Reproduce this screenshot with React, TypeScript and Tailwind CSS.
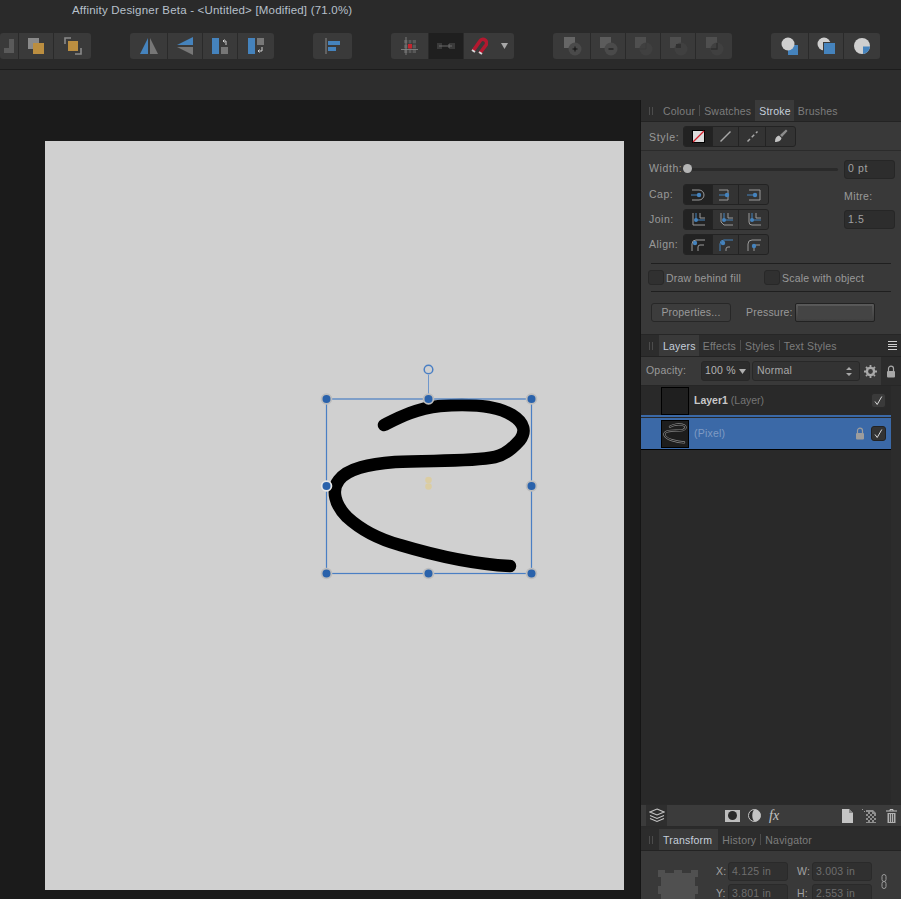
import type { ReactNode } from "react";

const Blue = "#4583bd";
const Grey = "#777777";

const STROKE_PATH =
  "M384 425 C400 417 415 409 440 406 C465 404 495 405 512 415 C525 423 526 432 520 440 C512 449 505 455 495 457 C470 462 430 460 395 462 C370 464 348 468 339 480 C331 490 335 505 347 517 C360 529 378 539 400 545 C430 554 470 564 510 566";

const Btn = ({ w, dark, children }: { w: number; dark?: boolean; children?: ReactNode }) => (
  <div
    className={`h-full flex items-center justify-center border-r border-[#2a2a2a] last:border-r-0 ${dark ? "bg-[#1f1f1f]" : ""}`}
    style={{ width: w }}
  >
    {children}
  </div>
);

const Group = ({ children, className = "" }: { children: ReactNode; className?: string }) => (
  <div className={`flex h-[26px] rounded-[3px] bg-[#3a3a3a] overflow-hidden ${className}`}>{children}</div>
);

const Ico = ({ w = 20, h = 20, children }: { w?: number; h?: number; children: ReactNode }) => (
  <svg width={w} height={h} viewBox={`0 0 ${w} ${h}`}>
    {children}
  </svg>
);

const ArrangeIcon = ({ front }: { front: boolean }) =>
  front ? (
    <Ico>
      <rect x="2" y="2" width="11" height="11" fill="#8a8a8a" />
      <rect x="7" y="7" width="11" height="11" fill="#bb8e40" />
    </Ico>
  ) : (
    <Ico>
      <path d="M2 8V2h6M18 12v6h-6" fill="none" stroke="#8a8a8a" strokeWidth="1.6" />
      <rect x="5" y="5" width="10" height="10" fill="#bb8e40" />
    </Ico>
  );

const Boolean1 = ({ kind }: { kind: "add" | "sub" | "x1" | "x2" | "x3" }) => {
  const bright = kind === "add" ? "#666666" : kind === "sub" ? "#5c5c5c" : "#4f4f4f";
  return (
    <Ico w={22} h={22}>
      <rect x="3" y="2" width="11" height="11" fill={bright} />
      <circle cx="14" cy="14" r="6.5" fill={kind === "add" || kind === "sub" ? "#4a4a4a" : "#404040"} />
      {kind === "add" && <path d="M11.5 14h5M14 11.5v5" stroke="#111" strokeWidth="1" />}
      {kind === "sub" && <path d="M11.5 14h5" stroke="#111" strokeWidth="1" />}
      {kind === "x1" && <path d="M14 8v6H8" stroke="#3a3a3a" strokeWidth="1" fill="none" />}
      {kind === "x2" && <path d="M9 9h5v4h-5z" fill="#303030" />}
      {kind === "x3" && <path d="M14 8v6H8" stroke="#2e2e2e" strokeWidth="1.3" fill="none" />}
    </Ico>
  );
};

const TabRow = ({
  tabs,
  active,
  right,
  activePr = 3,
}: {
  tabs: string[];
  active: string;
  right?: ReactNode;
  activePr?: number;
}) => (
  <div className="flex h-[22px] items-end bg-[#2c2c2c] text-[10.5px] tracking-[0.2px] text-[#7d7d7d] border-b border-[#232323] shrink-0 relative">
    <div className="w-[18px] h-full flex items-center justify-center gap-[2px] pl-[1px]">
      <span className="w-px h-[8px] bg-[#4c4c4c]" />
      <span className="w-px h-[8px] bg-[#4c4c4c]" />
    </div>
    {tabs.map((t, i) => (
      <div key={t} className="flex items-center h-full">
        {t === active ? (
          <span
            className="h-full flex items-center pl-[4px] pt-[2px] bg-[#3a3a3a] text-[#c6d0dc] font-medium"
            style={{ paddingRight: activePr }}
          >
            {t}
          </span>
        ) : (
          <span className="px-[4px] pt-[2px]">{t}</span>
        )}
        {t !== active && i < tabs.length - 1 && tabs[i + 1] !== active && (
          <span className="w-px h-[11px] bg-[#4c4c4c]" />
        )}
      </div>
    ))}
    {right}
  </div>
);

const Segments = ({ items, widths }: { items: ReactNode[]; widths: number[] }) => (
  <div className="flex h-[21px] rounded-[3px] border border-[#232323] bg-[#333333] overflow-hidden">
    {items.map((it, i) => (
      <div
        key={i}
        className={`h-full flex items-center justify-center border-r border-[#232323] last:border-r-0 ${i === 0 ? "bg-[#222222]" : ""}`}
        style={{ width: widths[i] }}
      >
        {it}
      </div>
    ))}
  </div>
);

const CapIcon = ({ kind }: { kind: number }) => (
  <Ico w={16} h={14}>
    {kind === 0 && <path d="M2 2h7a5 5 0 0 1 0 10H2" fill="none" stroke="#9a9a9a" />}
    {kind === 1 && <path d="M1 2h9v10H1" fill="none" stroke="#9a9a9a" />}
    {kind === 2 && <path d="M3 2h11v10H3" fill="none" stroke="#9a9a9a" />}
    <path d="M1 7h9" stroke={Blue} />
    <circle cx="9" cy="7" r="2.2" fill={Blue} />
  </Ico>
);

const JoinIcon = ({ kind }: { kind: number }) => (
  <Ico w={16} h={14}>
    <path
      d={kind === 0 ? "M3 0v12h12" : kind === 1 ? "M3 0v9l3 3h9" : "M3 0v9a3 3 0 0 0 3 3h9"}
      fill="none"
      stroke="#9a9a9a"
    />
    <path d="M10 0v5h5" fill="none" stroke="#9a9a9a" />
    <path d="M6 0v7h9" fill="none" stroke={Blue} />
    <circle cx="6" cy="7" r="2" fill={Blue} />
  </Ico>
);

const AlignIcon = ({ kind }: { kind: number }) => (
  <Ico w={16} h={14}>
    <path d="M2 13V6a4 4 0 0 1 4-4h9" fill="none" stroke={kind === 1 ? Blue : "#9a9a9a"} />
    {kind !== 1 && <path d="M8 13V9a2 2 0 0 1 2-2h4" fill="none" stroke="#9a9a9a" />}
    {kind === 1 && <path d="M8 13v-2a2 2 0 0 1 2-2h2" fill="none" stroke="#9a9a9a" />}
    <circle cx={kind === 2 ? 8 : 5} cy={kind === 2 ? 8 : 5} r="2.2" fill={Blue} />
  </Ico>
);

const Field = ({ w, h, children }: { w: number; h: number; children: ReactNode }) => (
  <div
    className="rounded-[3px] bg-[#2d2d2d] border border-[#262626] flex items-center pl-[3px] text-[#a2a2a2] tracking-[0.6px]"
    style={{ width: w, height: h }}
  >
    {children}
  </div>
);

const Lock = ({ c = "#a8a8a8" }: { c?: string }) => (
  <Ico w={10} h={13}>
    <path d="M2.5 6V3.6a2.5 2.5 0 0 1 5 0V6" fill="none" stroke={c} strokeWidth="1.2" />
    <rect x="1" y="6" width="8" height="6.5" rx="1" fill={c} />
  </Ico>
);

const Check = ({ strong }: { strong?: boolean }) => (
  <div className={`w-[15px] h-[15px] rounded-[3px] flex items-center justify-center border ${strong ? "bg-[#333333] border-[#222222]" : "bg-[#3a3a3a] border-[#2a2a2a]"}`}>
    <Ico w={11} h={11}>
      <path d="M2 6.5 4.2 9.5 8.8 1.5" fill="none" stroke="#d8d8d8" strokeWidth="1" />
    </Ico>
  </div>
);

const Handle = ({ x, y, ring = "#bdbdbd" }: { x: number; y: number; ring?: string }) => (
  <g>
    <circle cx={x} cy={y} r="5.8" fill={ring} />
    <circle cx={x} cy={y} r="4" fill="#2a62ab" />
  </g>
);

const Canvas = () => (
  <div className="w-[640px] bg-[#1b1b1b] pl-[45px] pt-[41px] shrink-0">
    <div className="relative w-[579px] h-[749px] bg-[#d0d0d0]">
      {/* drawing, coords are relative to the window */}
      <svg className="absolute inset-0" width="579" height="749" viewBox="45 141 579 749">
        <path d={STROKE_PATH} fill="none" stroke="#000" strokeWidth="12.5" strokeLinecap="round" strokeLinejoin="round" />
        <rect x="326.5" y="399" width="205" height="174.5" fill="none" stroke="#4a7fc4" strokeWidth="1.2" />
        <path d="M428.5 375v24" stroke="#6f97cc" strokeWidth="1" />
        <circle cx="428.5" cy="369.5" r="4.3" fill="#d0d0d0" stroke="#4a7fc4" strokeWidth="1.5" />
        <circle cx="428.5" cy="480" r="3.3" fill="#dbcda3" />
        <circle cx="428.5" cy="486.5" r="3.3" fill="#dbcda3" />
        <Handle x={326.5} y={399} />
        <Handle x={428.5} y={399} />
        <Handle x={531.5} y={399} />
        <Handle x={326.5} y={486} ring="#e6e6e6" />
        <Handle x={531.5} y={486} />
        <Handle x={326.5} y={573.5} />
        <Handle x={428.5} y={573.5} />
        <Handle x={531.5} y={573.5} />
      </svg>
    </div>
  </div>
);

const StrokePanel = () => (
  <div className="h-[235px] shrink-0 flex flex-col bg-[#393939] border-b border-[#262626]">
    <TabRow tabs={["Colour", "Swatches", "Stroke", "Brushes"]} active="Stroke" />
    <div className="h-[29px] flex items-center pl-[8px] border-b border-[#2b2b2b] shrink-0">
      <span className="w-[34px] pt-[4px] tracking-[0.7px]">Style:</span>
      <Segments
        widths={[29, 26, 27, 29]}
        items={[
          <svg key="n" width="13" height="13" viewBox="0 0 13 13">
            <rect x="0.5" y="0.5" width="12" height="12" fill="#dcdcdc" stroke="#000" />
            <path d="M1 12 12 1" stroke="#d3202c" strokeWidth="1.2" />
          </svg>,
          <svg key="l" width="13" height="13" viewBox="0 0 13 13">
            <path d="M1.5 11.5 11.5 1.5" stroke="#a8a8a8" strokeWidth="1.5" />
          </svg>,
          <svg key="d" width="13" height="13" viewBox="0 0 13 13">
            <path d="M1.5 11.5 11.5 1.5" stroke="#a8a8a8" strokeWidth="1.5" strokeDasharray="3.5 2.5" />
          </svg>,
          <svg key="b" width="14" height="14" viewBox="0 0 14 14">
            <path d="M1 13c0-4 1.500-6 4-6.500L7.500 9C7 12 4 13 1 13z" fill="#c4c4c4" />
            <path d="M6 6 12 0.500 13.500 2 8 8z" fill="#8c8c8c" />
          </svg>,
        ]}
      />
    </div>
    <div className="flex items-center h-[20px] mt-[8px] pl-[8px] shrink-0">
      <span className="w-[34px] tracking-[0.6px]">Width:</span>
      <div className="relative w-[155px] h-[3px] rounded-full bg-[#2a2a2a]">
        <span className="absolute left-0 top-[-3.500px] w-[9px] h-[9px] rounded-full bg-[#b5b5b5]" />
      </div>
      <div className="ml-[6px]">
        <Field w={51} h={19}>
          0 pt
        </Field>
      </div>
    </div>
    <div className="flex pl-[8px] mt-[5px] shrink-0">
      <div className="flex flex-col gap-[4px] w-[195px]">
        {[
          { label: "Cap:", icon: (k: number) => <CapIcon kind={k} /> },
          { label: "Join:", icon: (k: number) => <JoinIcon kind={k} /> },
          { label: "Align:", icon: (k: number) => <AlignIcon kind={k} /> },
        ].map((row) => (
          <div key={row.label} className="flex items-center">
            <span className="w-[34px] tracking-[0.5px]">{row.label}</span>
            <Segments widths={[29, 26, 29]} items={[row.icon(0), row.icon(1), row.icon(2)]} />
          </div>
        ))}
      </div>
      <div className="pt-[5px]">
        <div className="h-[21px] leading-[14px] tracking-[0.4px]">Mitre:</div>
        <Field w={51} h={19}>
          1.5
        </Field>
      </div>
    </div>
    <div className="h-px bg-[#1f1f1f] mx-[10px] mt-[8px] shrink-0" />
    <div className="flex items-center h-[27px] pl-[7px] shrink-0">
      <span className="w-[16px] h-[15px] rounded-[3px] bg-[#303030] border border-[#282828] shrink-0" />
      <span className="ml-[2px] w-[98px] pt-[3px]">Draw behind fill</span>
      <span className="w-[16px] h-[15px] rounded-[3px] bg-[#303030] border border-[#282828] shrink-0" />
      <span className="ml-[2px] pt-[3px]">Scale with object</span>
    </div>
    <div className="h-px bg-[#1f1f1f] mx-[10px] shrink-0" />
    <div className="flex items-center pl-[10px] mt-[11px] shrink-0">
      <div className="w-[80px] h-[19px] rounded-[3px] border border-[#272727] bg-[#3c3c3c] flex items-center justify-center">
        Properties...
      </div>
      <span className="ml-[15px] w-[49px]">Pressure:</span>
      <div className="w-[80px] h-[19px] rounded-[2px] border border-[#222222] bg-gradient-to-b from-[#5a5a5a] to-[#3f3f3f] p-[2px]">
        <div className="h-full bg-[#444444]" />
      </div>
    </div>
  </div>
);

const LayersPanel = () => (
  <div className="flex-1 flex flex-col min-h-0 bg-[#292929]">
    <TabRow
      tabs={["Layers", "Effects", "Styles", "Text Styles"]}
      active="Layers"
      right={
        <div className="absolute right-0 top-[6px] w-[13px] flex flex-col gap-[1.500px] items-start">
          <span className="w-[9px] h-px bg-[#cfcfcf]" />
          <span className="w-[9px] h-px bg-[#cfcfcf]" />
          <span className="w-[9px] h-px bg-[#cfcfcf]" />
          <span className="w-[9px] h-px bg-[#cfcfcf]" />
        </div>
      }
    />
    <div className="h-[29px] flex items-center pl-[5px] bg-[#393939] border-b border-[#262626] shrink-0">
      <span className="w-[55px]">Opacity:</span>
      <div className="w-[49px] h-[20px] rounded-[3px] bg-[#2c2c2c] border border-[#282828] flex items-center justify-between px-[3px] text-[#b4b4b4]">
        100 %
        <svg width="7" height="5" viewBox="0 0 7 5">
          <path d="M0 0h7L3.500 5z" fill="#b0b0b0" />
        </svg>
      </div>
      <div className="ml-[2px] w-[108px] h-[20px] rounded-[3px] bg-[#333333] border border-[#282828] flex items-center justify-between pl-[4px] pr-[7px] text-[#a8a8a8]">
        Normal
        <svg width="6" height="11" viewBox="0 0 6 11">
          <path d="M0 4 3 1l3 3zM0 7l3 3 3-3z" fill="#a8a8a8" />
        </svg>
      </div>
      <div className="w-[21px] flex justify-center">
        <svg width="13" height="13" viewBox="0 0 13 13">
          <circle cx="6.500" cy="6.500" r="3.600" fill="none" stroke="#a8a8a8" strokeWidth="2.400" />
          <path d="M6.500 0v13M0 6.500h13M2 2l9 9M11 2l-9 9" stroke="#a8a8a8" strokeWidth="1.800" strokeDasharray="2 9 2 0" />
        </svg>
      </div>
      <div className="w-[20px] h-[28px] bg-[#2c2c2c] flex items-center justify-center ml-auto">
        <Lock />
      </div>
    </div>
    <div className="flex-1 flex min-h-0">
      <div className="w-[250px] flex flex-col">
        <div className="h-[31px] flex items-center pl-[20px] border-b-2 border-[#3b69a7] pr-[5px] shrink-0">
          <div className="w-[28px] h-[28px] border border-black bg-[#1f1f1f] mt-[1px]" />
          <span className="ml-[5px] font-semibold tracking-normal text-[#c8c8c8]">Layer1</span>
          <span className="ml-[3px] tracking-normal text-[#757575]">(Layer)</span>
          <div className="ml-auto">
            <Check />
          </div>
        </div>
        <div className="h-[32px] mt-px flex items-center pl-[20px] pr-[5px] bg-[#3b69a7] border-b border-black shrink-0">
          <div className="w-[28px] h-[28px] border border-black bg-[#1d1d1d] flex items-center justify-center">
            <svg width="24" height="21" viewBox="322 395 214 182">
              <path d={STROKE_PATH} fill="none" stroke="#8c8c8c" strokeWidth="20" strokeLinecap="round" />
              <path d={STROKE_PATH} fill="none" stroke="#1d1d1d" strokeWidth="9" strokeLinecap="round" />
            </svg>
          </div>
          <span className="ml-[5px] text-[#7f9bc4]">(Pixel)</span>
          <div className="ml-auto mr-[6px]">
            <Lock c="#9d9d9d" />
          </div>
          <Check strong />
        </div>
      </div>
      <div className="flex-1 bg-[#2c2c2c]" />
    </div>
    <div className="h-[23px] flex items-center bg-[#3b3b3b] border-y border-[#2a2a2a] shrink-0 relative">
      <div className="ml-[5px] w-[21px] h-[21px] bg-[#2e2e2e] flex items-center justify-center">
        <svg width="16" height="15" viewBox="0 0 16 15">
          <path d="M8 1 15 4 8 7 1 4zM1 7.500 8 10.500 15 7.500M1 10.500 8 13.500 15 10.500" fill="none" stroke="#c4c4c4" strokeWidth="1.100" />
        </svg>
      </div>
      <div className="ml-[58px] w-[15px] h-[12px] bg-[#bdbdbd] flex items-center justify-center">
        <span className="w-[9px] h-[9px] rounded-full bg-[#2b2b2b]" />
      </div>
      <svg className="ml-[8px]" width="13" height="13" viewBox="0 0 13 13">
        <circle cx="6.500" cy="6.500" r="6" fill="#2e2e2e" stroke="#c4c4c4" />
        <path d="M6.500.5a6 6 0 0 0 0 12c3-2 3-10 0-12z" fill="#c4c4c4" transform="scale(-1 1) translate(-13 0)" />
      </svg>
      <span className="ml-[8px] w-[16px] font-['Liberation_Serif',serif] italic text-[14px] text-[#c4c4c4]">fx</span>
      <svg className="ml-[57px]" width="11" height="14" viewBox="0 0 11 14">
        <path d="M0 0h7l4 4v10H0z" fill="#c4c4c4" />
        <path d="M7 0v4h4" fill="#888" />
      </svg>
      <svg className="ml-[9px]" width="15" height="14" viewBox="0 0 15 14">
        <path d="M4 1h7l3 3v10H4z" fill="#8f8f8f" />
        <path d="M4 3h2v2H4zM8 3h2v2H8zM6 5h2v2H6zM10 5h2v2h-2zM4 7h2v2H4zM8 7h2v2H8zM12 7h2v2h-2zM6 9h2v2H6zM10 9h2v2h-2zM4 11h2v2H4zM8 11h2v2H8zM12 11h2v2h-2z" fill="#3a3a3a" />
        <path d="M0 0h1v1H0zM2 2h1v1H2z" fill="#999" />
      </svg>
      <svg className="ml-[9px]" width="11" height="14" viewBox="0 0 11 14">
        <path d="M0 2h11M4 2V.5h3V2" fill="none" stroke="#c4c4c4" />
        <path d="M1.500 4h8v10h-8z" fill="#b0b0b0" />
        <path d="M3.500 5v8M5.500 5v8M7.500 5v8" stroke="#3a3a3a" strokeWidth="0.800" />
      </svg>
    </div>
  </div>
);

const TransformPanel = () => (
  <div className="h-[70px] shrink-0 bg-[#393939] flex flex-col mt-[2px] overflow-hidden">
    <TabRow tabs={["Transform", "History", "Navigator"]} active="Transform" activePr={6} />
    <div className="flex pt-[11px]">
      <div className="w-[75px] pl-[17px] pt-[8px] shrink-0">
        <svg width="40" height="40" viewBox="0 0 40 40">
          <rect x="3" y="3" width="34" height="34" fill="#505050" />
          <path d="M0 0h7v7H0zM33 0h7v7h-7zM16 0h8v5h-8zM0 16h5v8H0zM35 16h5v8h-5z" fill="#505050" />
        </svg>
      </div>
      <div className="flex flex-col gap-[3px]">
        {[
          ["X:", "4.125 in", "W:", "3.003 in"],
          ["Y:", "3.801 in", "H:", "2.553 in"],
        ].map((r) => (
          <div key={r[0]} className="flex items-center h-[19px]">
            <span className="w-[12px] text-[#a2a2a2]">{r[0]}</span>
            <div className="w-[60px] h-[19px] rounded-[3px] bg-[#303030] border border-[#2a2a2a] flex items-center pl-[3px] text-[#6e6e6e]">
              {r[1]}
            </div>
            <span className="ml-[9px] w-[15px] text-[#a2a2a2]">{r[2]}</span>
            <div className="w-[60px] h-[19px] rounded-[3px] bg-[#303030] border border-[#2a2a2a] flex items-center pl-[3px] text-[#6e6e6e]">
              {r[3]}
            </div>
          </div>
        ))}
      </div>
      <svg className="ml-[9px] mt-[12px]" width="6" height="15" viewBox="0 0 6 15">
        <rect x="1" y="0.500" width="4" height="7" rx="2" fill="none" stroke="#9a9a9a" />
        <rect x="1" y="7.500" width="4" height="7" rx="2" fill="none" stroke="#9a9a9a" />
      </svg>
    </div>
  </div>
);

export default function App() {
  return (
    <div className="w-[901px] h-[899px] overflow-hidden flex flex-col bg-[#2b2b2b] font-['Liberation_Sans',Arial,sans-serif] text-[10.5px] tracking-[0.2px] text-[#9a9a9a]">
      <div className="h-[70px] shrink-0 bg-[#2a2a2a] border-b border-[#1c1c1c]">
        <div className="h-[33px] pl-[72px] pt-[2px] text-[11.500px] tracking-[0.2px] text-[#b7c0cb]">
          Affinity Designer Beta - &lt;Untitled&gt; [Modified] (71.0%)
        </div>
        <div className="flex gap-[39px]">
          <Group>
            <Btn w={19}>
              <div className="w-[10px] h-[14px] border-r-[5px] border-b-[5px] border-[#5a5a5a] self-center" />
            </Btn>
            <Btn w={35}>
              <ArrangeIcon front />
            </Btn>
            <Btn w={37}>
              <ArrangeIcon front={false} />
            </Btn>
          </Group>
          <Group>
            <Btn w={38}>
              <Ico>
                <path d="M9 2v16H1z" fill={Blue} />
                <path d="M11 2v16h8z" fill={Grey} />
              </Ico>
            </Btn>
            <Btn w={35}>
              <Ico>
                <path d="M18 1v8H2z" fill={Blue} />
                <path d="M18 19v-8H2z" fill={Grey} />
              </Ico>
            </Btn>
            <Btn w={35}>
              <Ico w={18} h={18}>
                <rect x="1" y="1" width="7" height="16" fill={Blue} />
                <rect x="10" y="10" width="7" height="7" fill={Grey} />
                <path d="M15 8V4h-3M13.500 2.500 12 4l1.500 1.500" fill="none" stroke="#d0d0d0" />
              </Ico>
            </Btn>
            <Btn w={36}>
              <Ico w={18} h={18}>
                <rect x="1" y="1" width="7" height="16" fill={Blue} />
                <rect x="10" y="1" width="7" height="7" fill={Grey} />
                <path d="M15 10v4h-4M12.500 12.500 11 14l1.500 1.500" fill="none" stroke="#d0d0d0" />
              </Ico>
            </Btn>
          </Group>
          <Group>
            <Btn w={39}>
              <Ico w={16} h={18}>
                <path d="M1 1v16" stroke="#8a8a8a" />
                <rect x="3" y="4" width="12" height="4" fill={Blue} />
                <rect x="3" y="10" width="8" height="4" fill={Blue} />
              </Ico>
            </Btn>
          </Group>
          <Group>
            <Btn w={38}>
              <Ico w={18} h={18}>
                <rect x="3" y="3" width="12" height="13" fill="#585858" />
                <path d="M7 3v13M11 3v13M3 7h12M3 12h12" stroke="#333" />
                <rect x="7" y="7" width="4" height="4.500" fill="#c4242e" />
                <path d="M0 12.500h17M5 0v18" stroke="#8a8a8a" strokeWidth="0.800" />
              </Ico>
            </Btn>
            <Btn w={35} dark>
              <Ico w={18} h={10}>
                <rect x="0" y="2" width="5" height="6" fill="#3a3a3a" />
                <rect x="12" y="2" width="6" height="6" fill="#3a3a3a" />
                <path d="M2 5h13M12 3v4" stroke="#6a6a6a" />
              </Ico>
            </Btn>
            <Btn w={50}>
              <div className="flex items-center gap-[13px]">
                <svg width="18" height="18" viewBox="0 0 18 18">
                  <path d="M3 14 10 4a3 3 0 0 1 6 4l-6 8" fill="none" stroke="#b2182f" strokeWidth="3.600" />
                  <path d="M2 13l3 2M9 15l3 2" stroke="#d5d5d5" strokeWidth="2" />
                </svg>
                <svg width="7" height="6" viewBox="0 0 7 6">
                  <path d="M0 0h7L3.500 6z" fill="#a8a8a8" />
                </svg>
              </div>
            </Btn>
          </Group>
          <Group>
            <Btn w={38}>
              <Boolean1 kind="add" />
            </Btn>
            <Btn w={35}>
              <Boolean1 kind="sub" />
            </Btn>
            <Btn w={35}>
              <Boolean1 kind="x1" />
            </Btn>
            <Btn w={35}>
              <Boolean1 kind="x2" />
            </Btn>
            <Btn w={36}>
              <Boolean1 kind="x3" />
            </Btn>
          </Group>
          <Group>
            <Btn w={38}>
              <Ico>
                <rect x="8" y="9" width="10" height="10" fill={Blue} />
                <circle cx="8" cy="8" r="6.500" fill="#cfcfcf" />
              </Ico>
            </Btn>
            <Btn w={35}>
              <Ico>
                <circle cx="8" cy="8" r="6.500" fill="#cfcfcf" />
                <rect x="7" y="6" width="12" height="12" fill="#3a3a3a" />
                <rect x="8" y="7" width="11" height="11" fill={Blue} />
              </Ico>
            </Btn>
            <Btn w={36}>
              <Ico>
                <circle cx="10" cy="10" r="8" fill="#cfcfcf" />
                <path d="M18 10.500h-7V18a8 8 0 0 0 7-7.500z" fill={Blue} />
              </Ico>
            </Btn>
          </Group>
        </div>
      </div>
      <div className="h-[30px] shrink-0 bg-[#2d2d2d]" />
      <div className="flex-1 flex min-h-0">
        <Canvas />
        <div className="flex-1 flex flex-col border-l border-[#151515] min-w-0">
          <StrokePanel />
          <LayersPanel />
          <TransformPanel />
        </div>
      </div>
    </div>
  );
}
